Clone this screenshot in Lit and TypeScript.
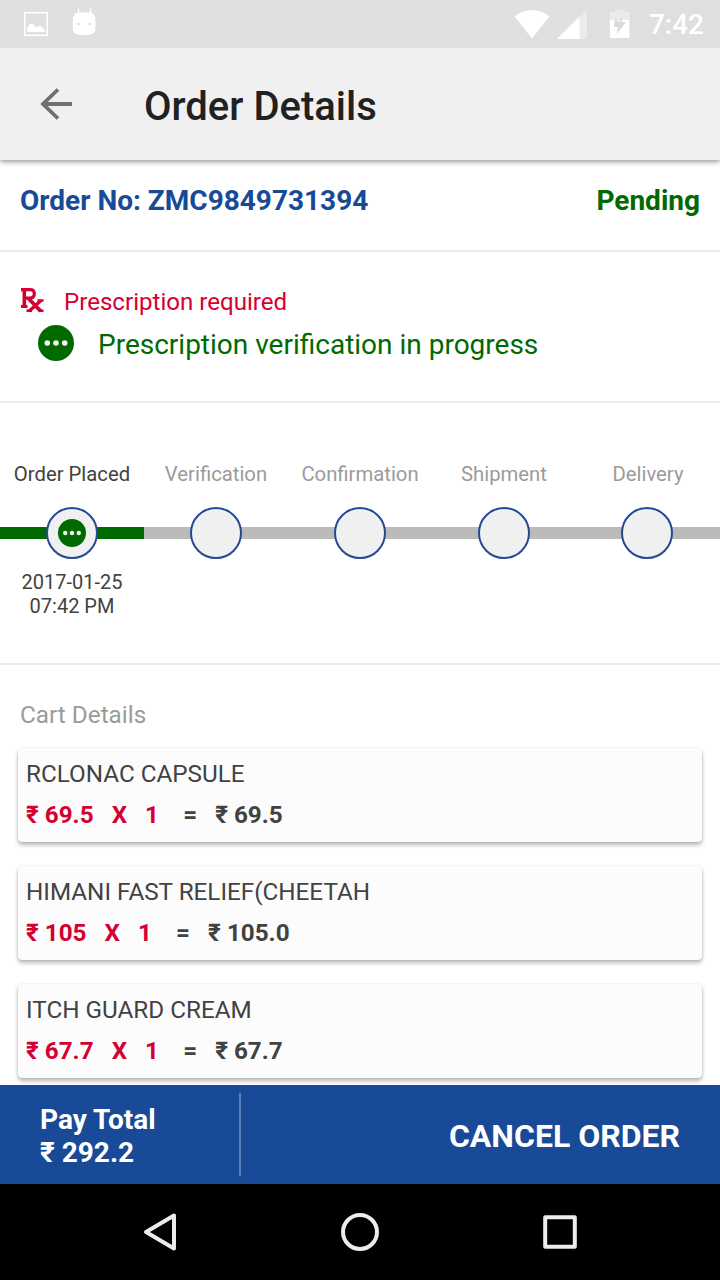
import { LitElement, html, css, svg } from "lit";
import { customElement } from "lit/decorators.js";

const steps = [
  { label: "Order Placed", active: true, date: "2017-01-25", time: "07:42 PM" },
  { label: "Verification" },
  { label: "Confirmation" },
  { label: "Shipment" },
  { label: "Delivery" },
] as { label: string; active?: boolean; date?: string; time?: string }[];

const items = [
  { name: "RCLONAC CAPSULE", price: "69.5", qty: "1", total: "69.5" },
  { name: "HIMANI FAST RELIEF(CHEETAH", price: "105", qty: "1", total: "105.0" },
  { name: "ITCH GUARD CREAM", price: "67.7", qty: "1", total: "67.7" },
];

const dots = svg`<circle cx="18" cy="18" r="18" fill="#006a00"/><g fill="#f4f4f4"><circle cx="9.3" cy="18" r="2.8"/><circle cx="18" cy="18" r="2.8"/><circle cx="26.7" cy="18" r="2.8"/></g>`;

@customElement("app-root")
export class AppRoot extends LitElement {
  static styles = css`
    :host {
      display: flex;
      flex-direction: column;
      height: 1280px;
      width: 720px;
      overflow: hidden;
      background: #fff;
      font-family: Roboto, "Liberation Sans", sans-serif;
      color: #424242;
    }
    * { box-sizing: border-box; }
    svg { display: block; flex: none; }
    .status {
      flex: none;
      height: 48px;
      background: #dfdfdf;
      color: #fff;
      display: flex;
      align-items: center;
      position: relative;
      z-index: 2;
    }
    .system { margin-left: 400px; }
    .clock { font-size: 28px; font-weight: 500; line-height: 34px; margin-left: auto; padding: 2px 16px 0 0; }
    .appbar {
      flex: none;
      height: 112px;
      background: #f0f0f0;
      box-shadow: 0 2px 5px rgba(0, 0, 0, 0.4);
      display: flex;
      align-items: center;
      padding-left: 32px;
      gap: 64px;
      z-index: 1;
    }
    .title { margin: 0; padding-top: 5px; font-size: 40px; font-weight: 500; line-height: 48px; color: #212121; }
    .content { flex: 1; min-height: 0; overflow: hidden; }
    .order {
      height: 92px;
      border-bottom: 2px solid #ebebeb;
      padding: 24px 20px 0;
      display: flex;
      justify-content: space-between;
      font-size: 28px;
      font-weight: 700;
      line-height: 33px;
    }
    .number { color: #174a97; }
    .pending { color: #006a00; }
    .rx { height: 151px; border-bottom: 2px solid #ebebeb; padding: 34px 20px 0; }
    .required { display: flex; align-items: center; gap: 20px; color: #d50032; font-size: 24.1px; line-height: 32px; }
    .verifying { display: flex; align-items: center; gap: 24px; padding-left: 18px; height: 50px; color: #006a00; font-size: 28px; line-height: 36px; }
    .verifying span { padding-top: 3px; }
    .tracker { height: 262px; border-bottom: 2px solid #ebebeb; padding-top: 59px; display: grid; grid-template-columns: repeat(5, 1fr); }
    .step { display: flex; flex-direction: column; align-items: stretch; text-align: center; font-size: 20px; line-height: 24px; color: #9b9b9b; }
    .label { font-size: 20.3px; }
    .track {
      margin: 21px 0 11px;
      height: 52px;
      display: flex;
      justify-content: center;
      background: linear-gradient(#bababa, #bababa) 0 20px / 100% 12px no-repeat;
    }
    .step:last-child .track { padding-right: 2px; }
    .node { width: 52px; height: 52px; border-radius: 50%; border: 2px solid #234a94; background: #f0f0f0; display: flex; align-items: center; justify-content: center; }
    .active { color: #424242; }
    .active .track { background-image: linear-gradient(#006a00, #006a00); }
    .cart { padding: 34px 18px 0; }
    .heading { margin: 0 0 17px 2px; font-size: 24.3px; font-weight: 400; line-height: 32px; color: #9b9b9b; }
    .card {
      height: 94px;
      margin-bottom: 24px;
      padding: 11px 8px 0;
      border-radius: 4px;
      background: #fcfcfc;
      box-shadow: 0 3px 4px rgba(0, 0, 0, 0.28), 0 0 2px rgba(0, 0, 0, 0.12);
      font-size: 24.25px;
    }
    .name { line-height: 30px; }
    .calc { margin-top: 11px; line-height: 30px; font-weight: 700; white-space: pre; }
    .unit { color: #d50032; }
    .footer { flex: none; height: 99px; background: #184a97; color: #fff; display: flex; z-index: 1; font-weight: 700; }
    .pay { width: 241px; padding: 18px 0 0 40px; font-size: 28px; line-height: 33px; }
    .rule { width: 2px; margin: 8px 0 8px -2px; background: #5c81b8; }
    .cancel { flex: 1; text-align: right; padding: 31px 40px 0 0; font-size: 32px; line-height: 40px; }
    .nav { flex: none; height: 96px; background: #000; }
  `;

  render() {
    return html`
      <div class="status">
        <svg width="110" height="48" viewBox="0 0 110 48">
          <path d="M24.8 12.8H47.2V35.2H24.8Z" fill="none" stroke="#fff" stroke-width="1.6"/>
          <path d="M27 32V27.5L29 25Q31.5 22.5 34 25L36 27.5 39 26.3Q41 25.5 42.5 27.5L45 30V32Z" fill="#fff"/>
          <path d="M78.5 13.5V9M90.5 13.5V9" fill="none" stroke="#fff" stroke-width="1.6" stroke-linecap="round"/>
          <path d="M79 12.6H89Q95.5 13 95.5 20V28Q95.5 35 88 35H80Q72.8 35 72.8 28V20Q72.8 13 79 12.6Z" fill="#fff"/>
          <circle cx="78.5" cy="24" r="1.3" fill="#dfdfdf"/><circle cx="89.8" cy="24" r="1.3" fill="#dfdfdf"/>
        </svg>
        <svg class="system" width="124" height="48" viewBox="510 0 124 48">
          <path d="M532 38.5L514.6 16.5Q522 10 532 10Q542 10 549.4 16.5Z" fill="#fff"/>
          <path d="M587 9V39H557Z" fill="#ebebeb"/>
          <path d="M579.5 16.5V39H557Z" fill="#fff"/>
          <path d="M610 20V12H615V9.5H624V12H629.5V20Z" fill="#ebebeb"/>
          <path d="M610 20H629.5V38H610Z" fill="#fff"/>
          <path d="M615 18L614 27H618L616.7 34L626 22H621.5L622.5 16.5L618.5 22Z" fill="#dadada"/>
        </svg>
        <div class="clock">7:42</div>
      </div>
      <header class="appbar">
        <svg width="48" height="48" viewBox="0 0 48 48"><path d="M40 24H11M26 9.5L11 24L26 38.5" fill="none" stroke="#707070" stroke-width="3.8"/></svg>
        <h1 class="title">Order Details</h1>
      </header>
      <main class="content">
        <section class="order"><span class="number">Order No: ZMC9849731394</span><span class="pending">Pending</span></section>
        <section class="rx">
          <div class="required">
            <svg width="24" height="28" viewBox="0 0 24 28" fill="none" stroke="#d50032">
              <path d="M1 1.7H10Q14.3 1.7 14.3 5.700T10 10.200H5M1 18.500H7.500" stroke-width="3.200"/>
              <path d="M4.300 1V19.500" stroke-width="3.600"/>
              <path d="M8.500 10.500L20.800 23.300" stroke-width="3.800"/>
              <path d="M21 12.500L9 23.300" stroke-width="3.300"/>
              <path d="M17.500 12.500H23.500M6.500 22.800H12M18.500 22.800H23.500" stroke-width="2.600"/>
            </svg>
            <span>Prescription required</span>
          </div>
          <div class="verifying"><svg width="36" height="36" viewBox="0 0 36 36">${dots}</svg><span>Prescription verification in progress</span></div>
        </section>
        <section class="tracker">
          ${steps.map((s) => html`<div class="step ${s.active ? "active" : ""}">
            <div class="label">${s.label}</div>
            <div class="track"><div class="node">${s.active ? html`<svg width="28" height="28" viewBox="0 0 36 36">${dots}</svg>` : ""}</div></div>
            ${s.date ? html`<div>${s.date}</div><div>${s.time}</div>` : ""}
          </div>`)}
        </section>
        <section class="cart">
          <h2 class="heading">Cart Details</h2>
          ${items.map((i) => html`<article class="card">
            <div class="name">${i.name}</div>
            <div class="calc"><span class="unit">${`₹ ${i.price}   X   ${i.qty}`}</span>${`    =   ₹ ${i.total}`}</div>
          </article>`)}
        </section>
      </main>
      <footer class="footer">
        <div class="pay"><div>Pay Total</div><div>₹ 292.2</div></div>
        <div class="rule"></div>
        <div class="cancel">CANCEL ORDER</div>
      </footer>
      <nav class="nav">
        <svg width="720" height="96" viewBox="0 0 720 96" fill="none" stroke="#ececec" stroke-width="4" stroke-linejoin="round">
          <path d="M174 31.5V64.5L146 48Z"/>
          <circle cx="360" cy="48" r="17"/>
          <rect x="545.2" y="33.2" width="29.6" height="29.6"/>
        </svg>
      </nav>
    `;
  }
}
